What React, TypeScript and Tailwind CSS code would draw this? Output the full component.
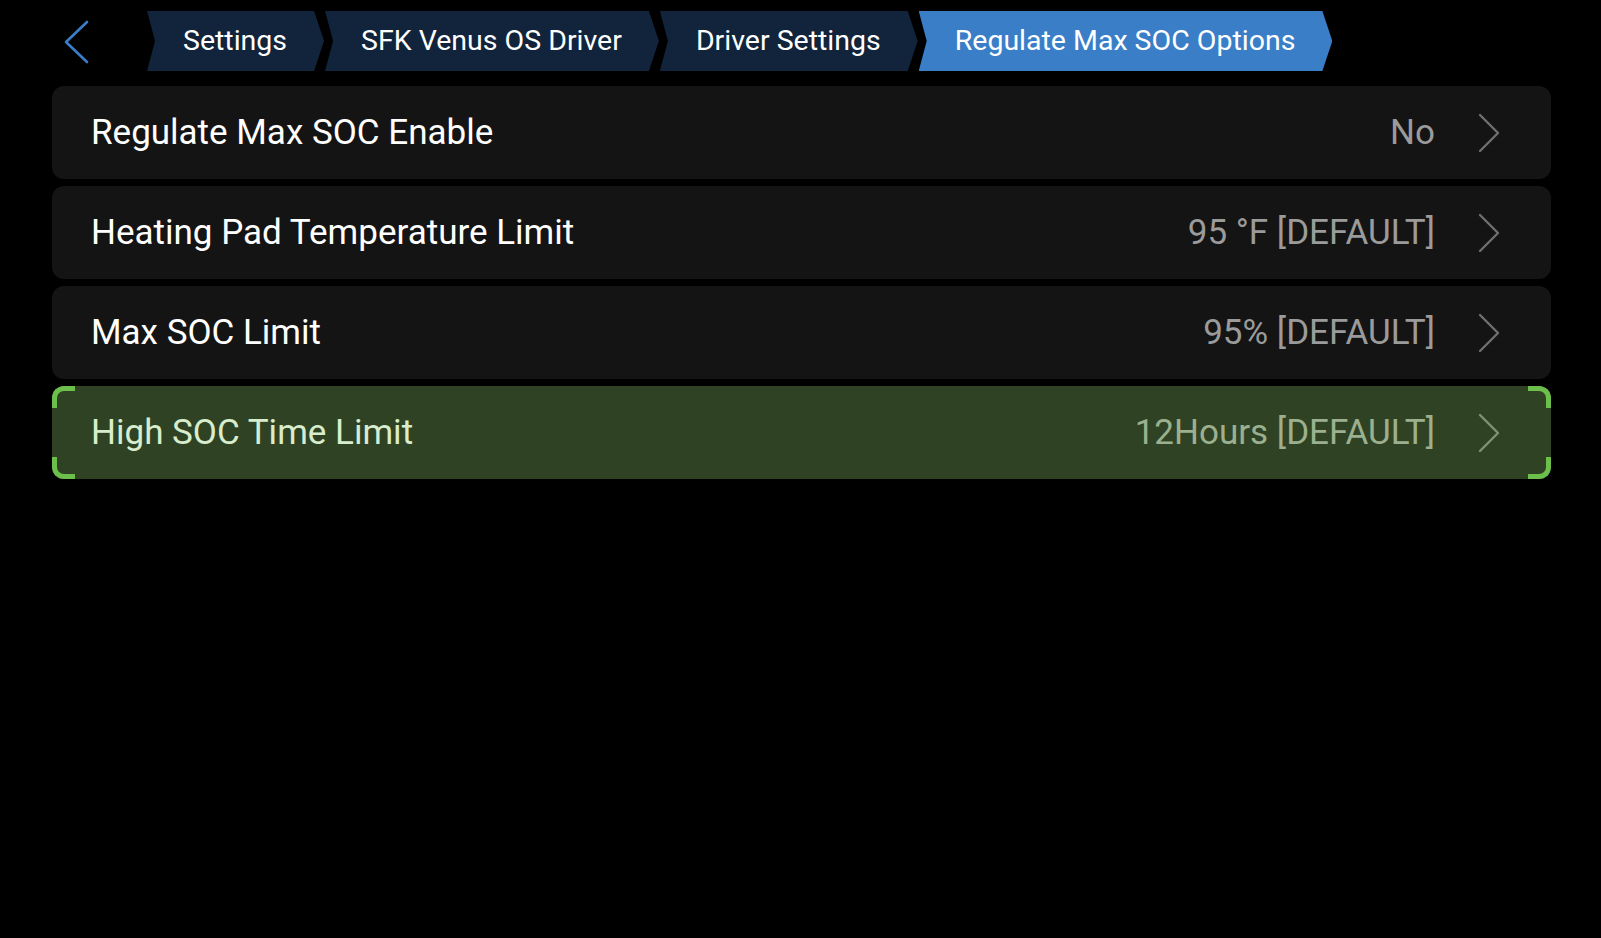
interface Crumb {
  label: string;
  active?: boolean;
}

interface Row {
  label: string;
  value: string;
  selected?: boolean;
}

const crumbs: Crumb[] = [
  { label: "Settings" },
  { label: "SFK Venus OS Driver" },
  { label: "Driver Settings" },
  { label: "Regulate Max SOC Options", active: true },
];

const rows: Row[] = [
  { label: "Regulate Max SOC Enable", value: "No" },
  { label: "Heating Pad Temperature Limit", value: "95 °F [DEFAULT]" },
  { label: "Max SOC Limit", value: "95% [DEFAULT]" },
  { label: "High SOC Time Limit", value: "12Hours [DEFAULT]", selected: true },
];

function Corner({ pos }: { pos: "tl" | "tr" | "bl" | "br" }) {
  const base = "pointer-events-none absolute h-[22px] w-[23px] border-[#6cbf4a]";
  const cls = {
    tl: "left-0 top-0 border-l-[5px] border-t-[5px] rounded-tl-[12px]",
    tr: "right-0 top-0 border-r-[5px] border-t-[5px] rounded-tr-[12px]",
    bl: "left-0 bottom-0 border-l-[5px] border-b-[5px] rounded-bl-[12px]",
    br: "right-0 bottom-0 border-r-[5px] border-b-[5px] rounded-br-[12px]",
  }[pos];
  return <span className={`${base} ${cls}`} />;
}

function Chevron({ color }: { color: string }) {
  return (
    <svg width="22" height="40" viewBox="0 0 22 40" fill="none" className="ml-[43px] shrink-0">
      <path d="M2 2 L20 20 L2 38" stroke={color} strokeWidth="2.4" strokeLinecap="round" strokeLinejoin="round" />
    </svg>
  );
}

export default function App() {
  return (
    <div className="min-h-screen w-full bg-black font-['Roboto',sans-serif] text-white">
      {/* Breadcrumb header */}
      <div className="flex h-[71px] items-start pt-[11px]">
        <button className="ml-[62px] mr-[57px] mt-[9px] flex h-[43px] w-[28px] items-center justify-center">
          <svg width="28" height="44" viewBox="0 0 28 44" fill="none">
            <path d="M25 2 L4 22 L25 42" stroke="#3a7ec8" strokeWidth="2.6" strokeLinecap="round" strokeLinejoin="round" />
          </svg>
        </button>
        <div className="flex gap-[1px]">
          {crumbs.map((c) => (
            <div
              key={c.label}
              className={`flex h-[60px] items-center pl-[36px] pr-[37px] pt-[1px] text-[28.5px] leading-none [clip-path:polygon(0_0,calc(100%-10px)_0,100%_50%,calc(100%-10px)_100%,0_100%,8px_50%)] ${
                c.active ? "bg-[#3a7ec8]" : "bg-[#11243b]"
              }`}
            >
              {c.label}
            </div>
          ))}
        </div>
      </div>

      {/* Settings list */}
      <div className="flex flex-col gap-[7px] pl-[52px] pr-[50px] pt-[15px]">
        {rows.map((r) => (
          <div
            key={r.label}
            className={`relative flex h-[93px] items-center rounded-[12px] pl-[39px] pr-[51px] ${
              r.selected ? "bg-[#2f4324]" : "bg-[#141414]"
            }`}
          >
            <span className={`text-[35px] leading-none ${r.selected ? "text-[#d8edcd]" : "text-white"}`}>{r.label}</span>
            <span className={`ml-auto text-[35px] leading-none ${r.selected ? "text-[#9cb08f]" : "text-[#9b9b9b]"}`}>
              {r.value}
            </span>
            <Chevron color={r.selected ? "#7d9471" : "#6f6f6f"} />
            {r.selected && (
              <>
                <Corner pos="tl" />
                <Corner pos="tr" />
                <Corner pos="bl" />
                <Corner pos="br" />
              </>
            )}
          </div>
        ))}
      </div>
    </div>
  );
}
